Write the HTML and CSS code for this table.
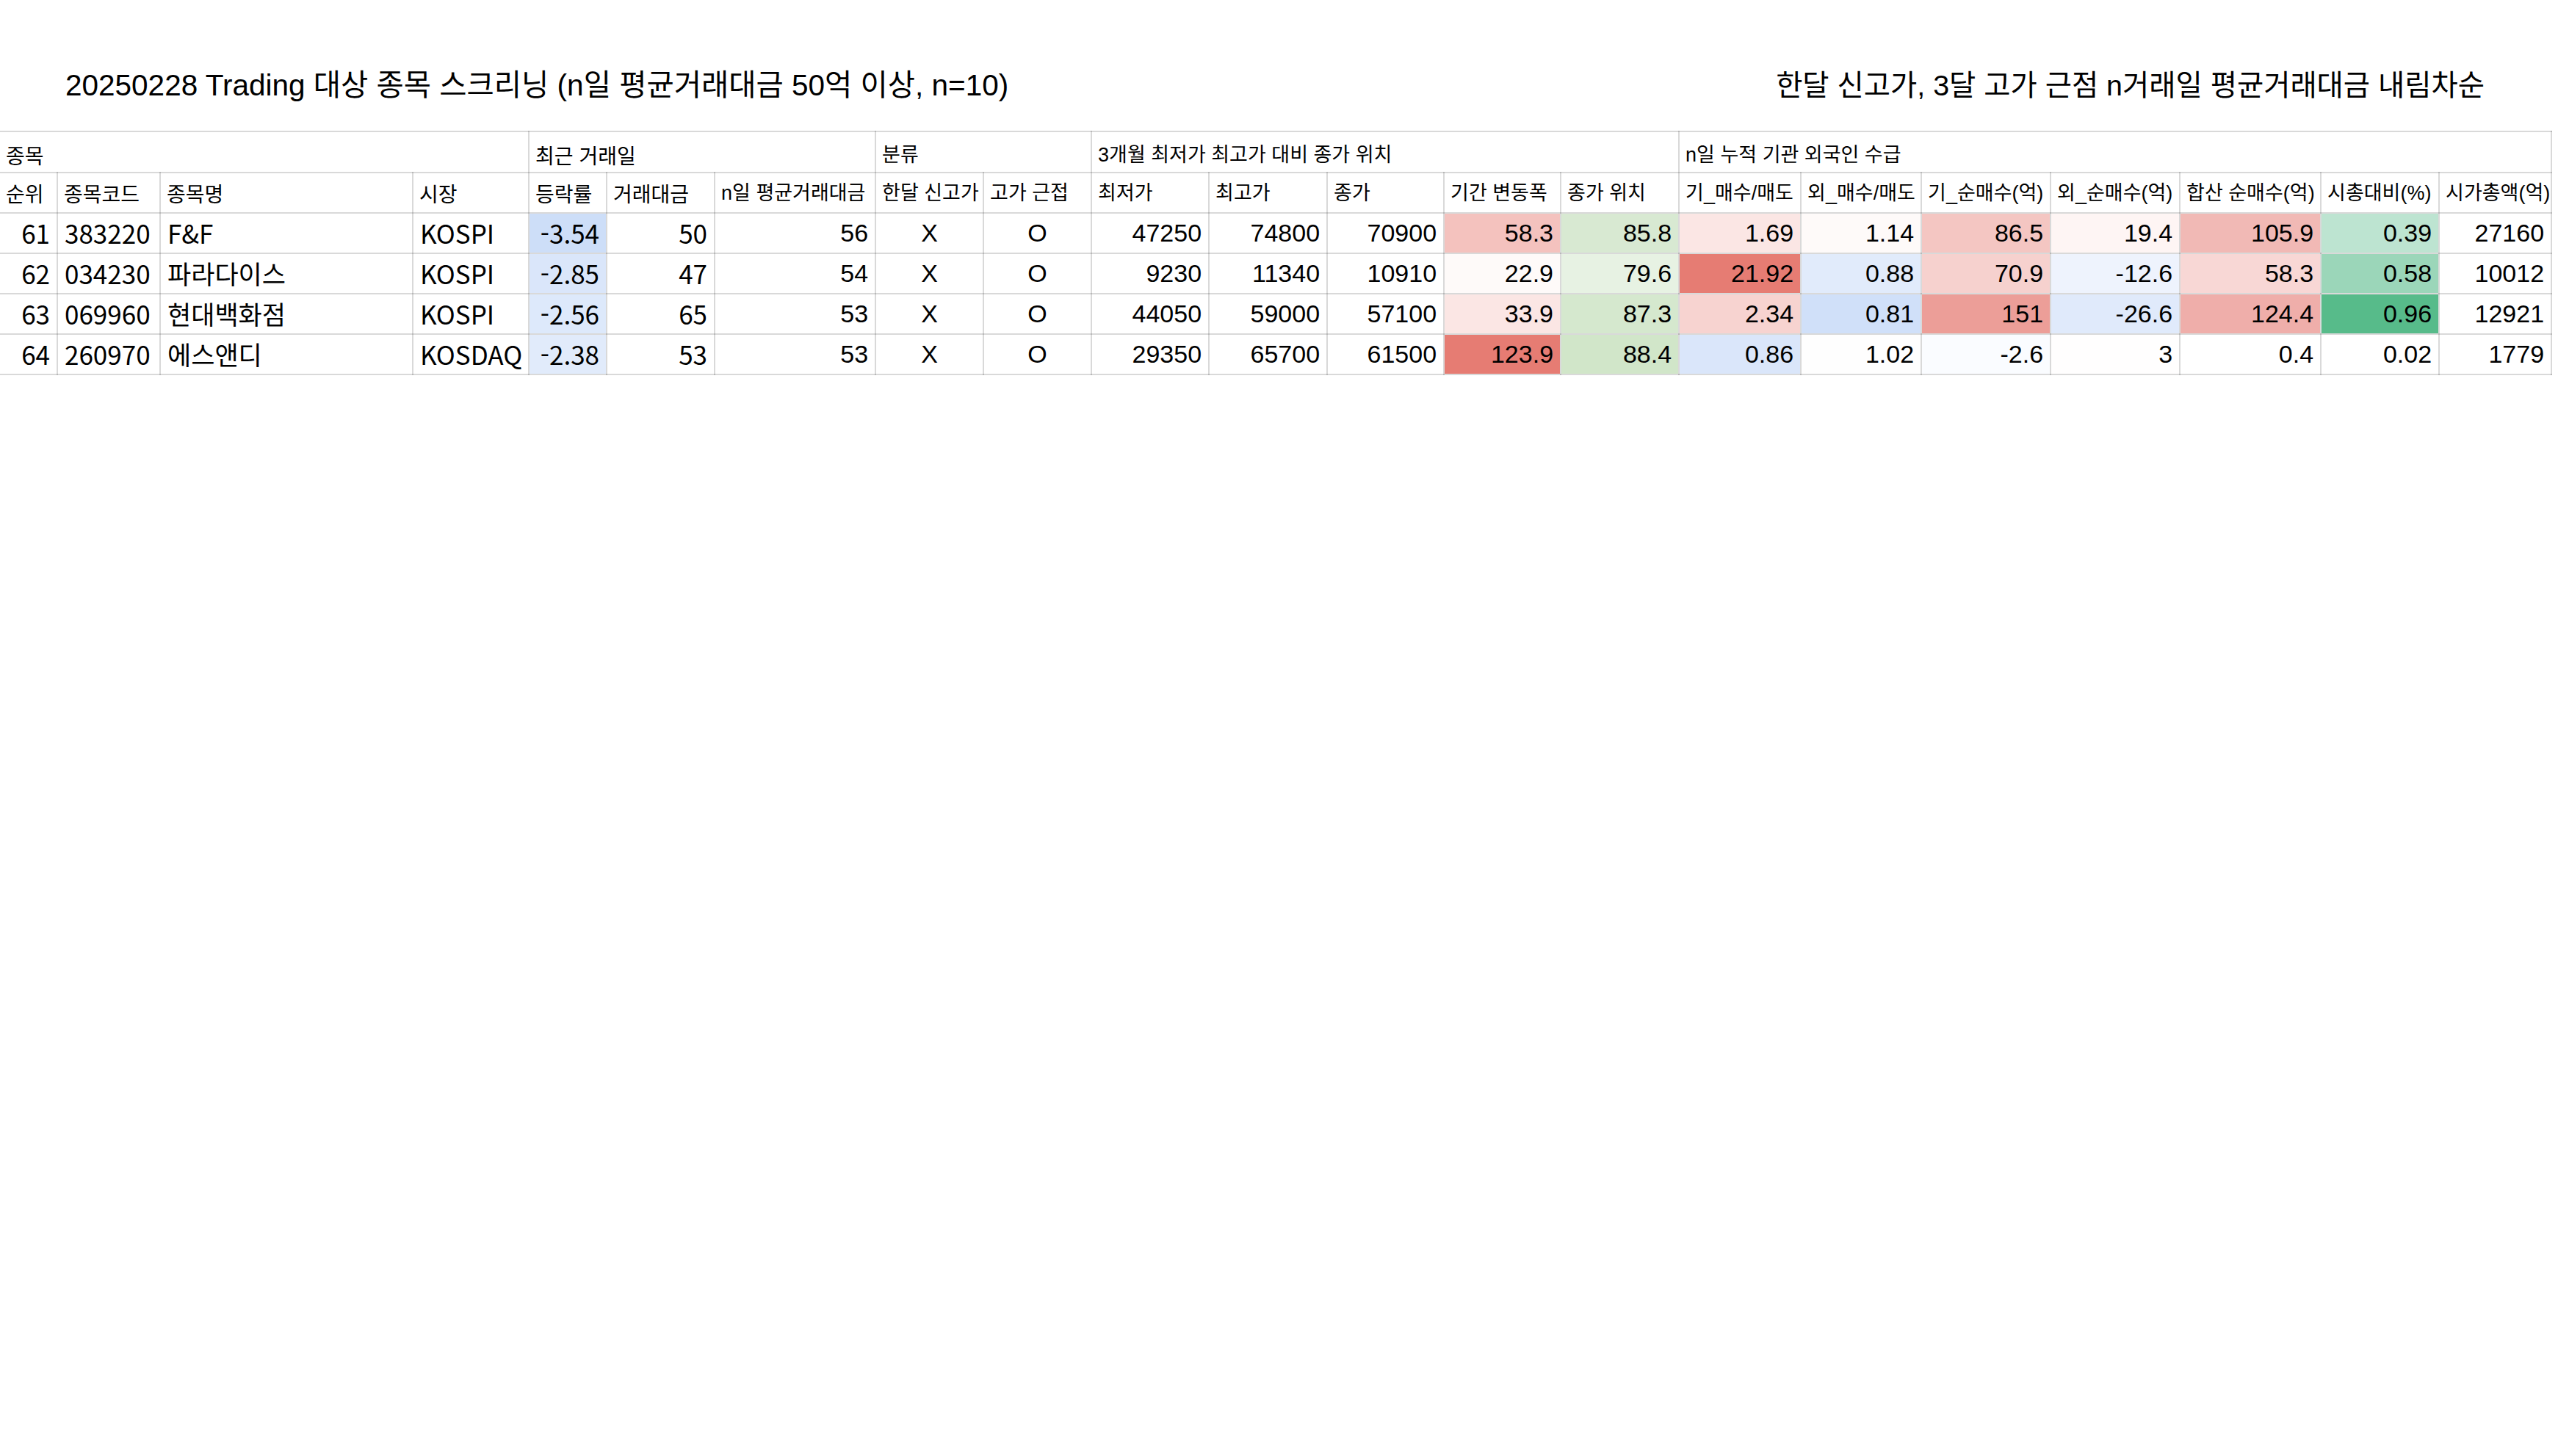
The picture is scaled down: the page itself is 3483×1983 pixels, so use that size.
FILE: index.html
```html
<!DOCTYPE html>
<html lang="ko">
<head>
<meta charset="utf-8">
<title>20250228 Trading 대상 종목 스크리닝</title>
<link rel="stylesheet" href="styles.css">
</head>
<body>
<header class="titles">
  <h1 class="title title-main">20250228 Trading 대상 종목 스크리닝 (n일 평균거래대금 50억 이상, n=10)</h1>
  <h2 class="title title-sort">한달 신고가, 3달 고가 근점 n거래일 평균거래대금 내림차순</h2>
</header>
<table class="grid">
  <colgroup>
    <col class="w78"><col class="w140"><col class="w344"><col class="w158"><col class="w106"><col class="w147"><col class="w219">
    <col class="w147"><col class="w147"><col class="w160"><col class="w161"><col class="w159"><col class="w159"><col class="w161">
    <col class="w166"><col class="w164"><col class="w176"><col class="w176"><col class="w192"><col class="w161"><col class="w153">
  </colgroup>
  <thead>
    <tr class="group">
      <th colspan="4" class="noto">종목</th>
      <th colspan="3" class="noto">최근 거래일</th>
      <th colspan="2">분류</th>
      <th colspan="5">3개월 최저가 최고가 대비 종가 위치</th>
      <th colspan="7">n일 누적 기관 외국인 수급</th>
    </tr>
    <tr class="head">
      <th class="noto">순위</th>
      <th class="noto">종목코드</th>
      <th class="noto">종목명</th>
      <th class="noto">시장</th>
      <th class="noto">등락률</th>
      <th class="noto">거래대금</th>
      <th>n일 평균거래대금</th>
      <th>한달 신고가</th>
      <th>고가 근접</th>
      <th>최저가</th>
      <th>최고가</th>
      <th>종가</th>
      <th>기간 변동폭</th>
      <th>종가 위치</th>
      <th>기_매수/매도</th>
      <th>외_매수/매도</th>
      <th>기_순매수(억)</th>
      <th>외_순매수(억)</th>
      <th>합산 순매수(억)</th>
      <th>시총대비(%)</th>
      <th>시가총액(억)</th>
    </tr>
  </thead>
  <tbody>
    <tr class="row">
      <td class="noto num">61</td>
      <td class="noto">383220</td>
      <td class="noto">F&amp;F</td>
      <td class="noto">KOSPI</td>
      <td class="noto num" style="background:#cddef8">-3.54</td>
      <td class="noto num">50</td>
      <td class="num">56</td>
      <td class="mid">X</td>
      <td class="mid">O</td>
      <td class="num">47250</td>
      <td class="num">74800</td>
      <td class="num">70900</td>
      <td class="num" style="background:#f4c2be">58.3</td>
      <td class="num" style="background:#d8e9d2">85.8</td>
      <td class="num" style="background:#fbe6e4">1.69</td>
      <td class="num" style="background:#fefaf9">1.14</td>
      <td class="num" style="background:#f4c6c2">86.5</td>
      <td class="num" style="background:#fef5f4">19.4</td>
      <td class="num" style="background:#f1b9b5">105.9</td>
      <td class="num" style="background:#bde4d1">0.39</td>
      <td class="num">27160</td>
    </tr>
    <tr class="row">
      <td class="noto num">62</td>
      <td class="noto">034230</td>
      <td class="noto">파라다이스</td>
      <td class="noto">KOSPI</td>
      <td class="noto num" style="background:#dae6fa">-2.85</td>
      <td class="noto num">47</td>
      <td class="num">54</td>
      <td class="mid">X</td>
      <td class="mid">O</td>
      <td class="num">9230</td>
      <td class="num">11340</td>
      <td class="num">10910</td>
      <td class="num" style="background:#fefaf9">22.9</td>
      <td class="num" style="background:#e7f2e3">79.6</td>
      <td class="num" style="background:#e67c73">21.92</td>
      <td class="num" style="background:#e1ebfb">0.88</td>
      <td class="num" style="background:#f6d1ce">70.9</td>
      <td class="num" style="background:#eef3fd">-12.6</td>
      <td class="num" style="background:#f8d7d5">58.3</td>
      <td class="num" style="background:#9bd6b9">0.58</td>
      <td class="num">10012</td>
    </tr>
    <tr class="row">
      <td class="noto num">63</td>
      <td class="noto">069960</td>
      <td class="noto">현대백화점</td>
      <td class="noto">KOSPI</td>
      <td class="noto num" style="background:#dde9fb">-2.56</td>
      <td class="noto num">65</td>
      <td class="num">53</td>
      <td class="mid">X</td>
      <td class="mid">O</td>
      <td class="num">44050</td>
      <td class="num">59000</td>
      <td class="num">57100</td>
      <td class="num" style="background:#fbe6e4">33.9</td>
      <td class="num" style="background:#d5e8ce">87.3</td>
      <td class="num" style="background:#f7d3d0">2.34</td>
      <td class="num" style="background:#d0e0f9">0.81</td>
      <td class="num" style="background:#ec9e98">151</td>
      <td class="num" style="background:#e0eafb">-26.6</td>
      <td class="num" style="background:#efaeaa">124.4</td>
      <td class="num" style="background:#57bb8a">0.96</td>
      <td class="num">12921</td>
    </tr>
    <tr class="row">
      <td class="noto num">64</td>
      <td class="noto">260970</td>
      <td class="noto">에스앤디</td>
      <td class="noto">KOSDAQ</td>
      <td class="noto num" style="background:#e1ebfb">-2.38</td>
      <td class="noto num">53</td>
      <td class="num">53</td>
      <td class="mid">X</td>
      <td class="mid">O</td>
      <td class="num">29350</td>
      <td class="num">65700</td>
      <td class="num">61500</td>
      <td class="num" style="background:#e67c73">123.9</td>
      <td class="num" style="background:#d1e6c9">88.4</td>
      <td class="num" style="background:#dae6fa">0.86</td>
      <td class="num" style="background:#fefefe">1.02</td>
      <td class="num" style="background:#fafcff">-2.6</td>
      <td class="num" style="background:#fffefe">3</td>
      <td class="num">0.4</td>
      <td class="num">0.02</td>
      <td class="num">1779</td>
    </tr>
  </tbody>
</table>
</body>
</html>
```

FILE: styles.css
```css
html, body {
  margin: 0;
  padding: 0;
  background: #ffffff;
  color: #000000;
  font-family: "Liberation Sans", "Noto Sans CJK KR", sans-serif;
}

.titles {
  display: flex;
  justify-content: space-between;
  align-items: center;
  padding: 92px 100px 0 89px;
  margin-bottom: 38px;
}

.title {
  margin: 0;
  font-size: 40px;
  line-height: 48px;
  font-weight: 400;
  white-space: nowrap;
}

.title-main {
  font-size: 40.5px;
}

.title-sort {
  font-size: 39.4px;
}

.grid {
  border-collapse: collapse;
  table-layout: fixed;
  width: 3474px;
}

.grid th,
.grid td {
  border: 2px solid rgba(0, 0, 0, 0.15);
  padding: 0 9px;
  white-space: nowrap;
  overflow: hidden;
  text-align: left;
  font-weight: 400;
}

.grid tr > :first-child {
  border-left: 0;
}

.grid th {
  font-size: 27px;
  padding: 0 6px 0 8px;
  font-family: "Liberation Sans", "Noto Sans CJK KR", sans-serif;
}

.grid th.noto {
  font-size: 28px;
}

.grid td {
  font-size: 34px;
  vertical-align: middle;
}

.grid .noto {
  font-family: "Noto Sans CJK KR", sans-serif;
}

.grid td.noto {
  font-size: 35px;
}

.group {
  height: 56px;
}

.group th {
  vertical-align: bottom;
  padding-bottom: 6px;
  line-height: 34px;
}

.head {
  height: 55px;
}

.head th {
  vertical-align: middle;
  line-height: 34px;
}

.row {
  height: 55px;
}

.row td {
  line-height: 44px;
  padding-bottom: 2px;
}

.grid td.num {
  text-align: right;
}

.grid td.mid {
  text-align: center;
}

.w78 { width: 78px; }
.w106 { width: 106px; }
.w140 { width: 140px; }
.w147 { width: 147px; }
.w153 { width: 153px; }
.w158 { width: 158px; }
.w159 { width: 159px; }
.w160 { width: 160px; }
.w161 { width: 161px; }
.w164 { width: 164px; }
.w166 { width: 166px; }
.w176 { width: 176px; }
.w192 { width: 192px; }
.w219 { width: 219px; }
.w344 { width: 344px; }
```
